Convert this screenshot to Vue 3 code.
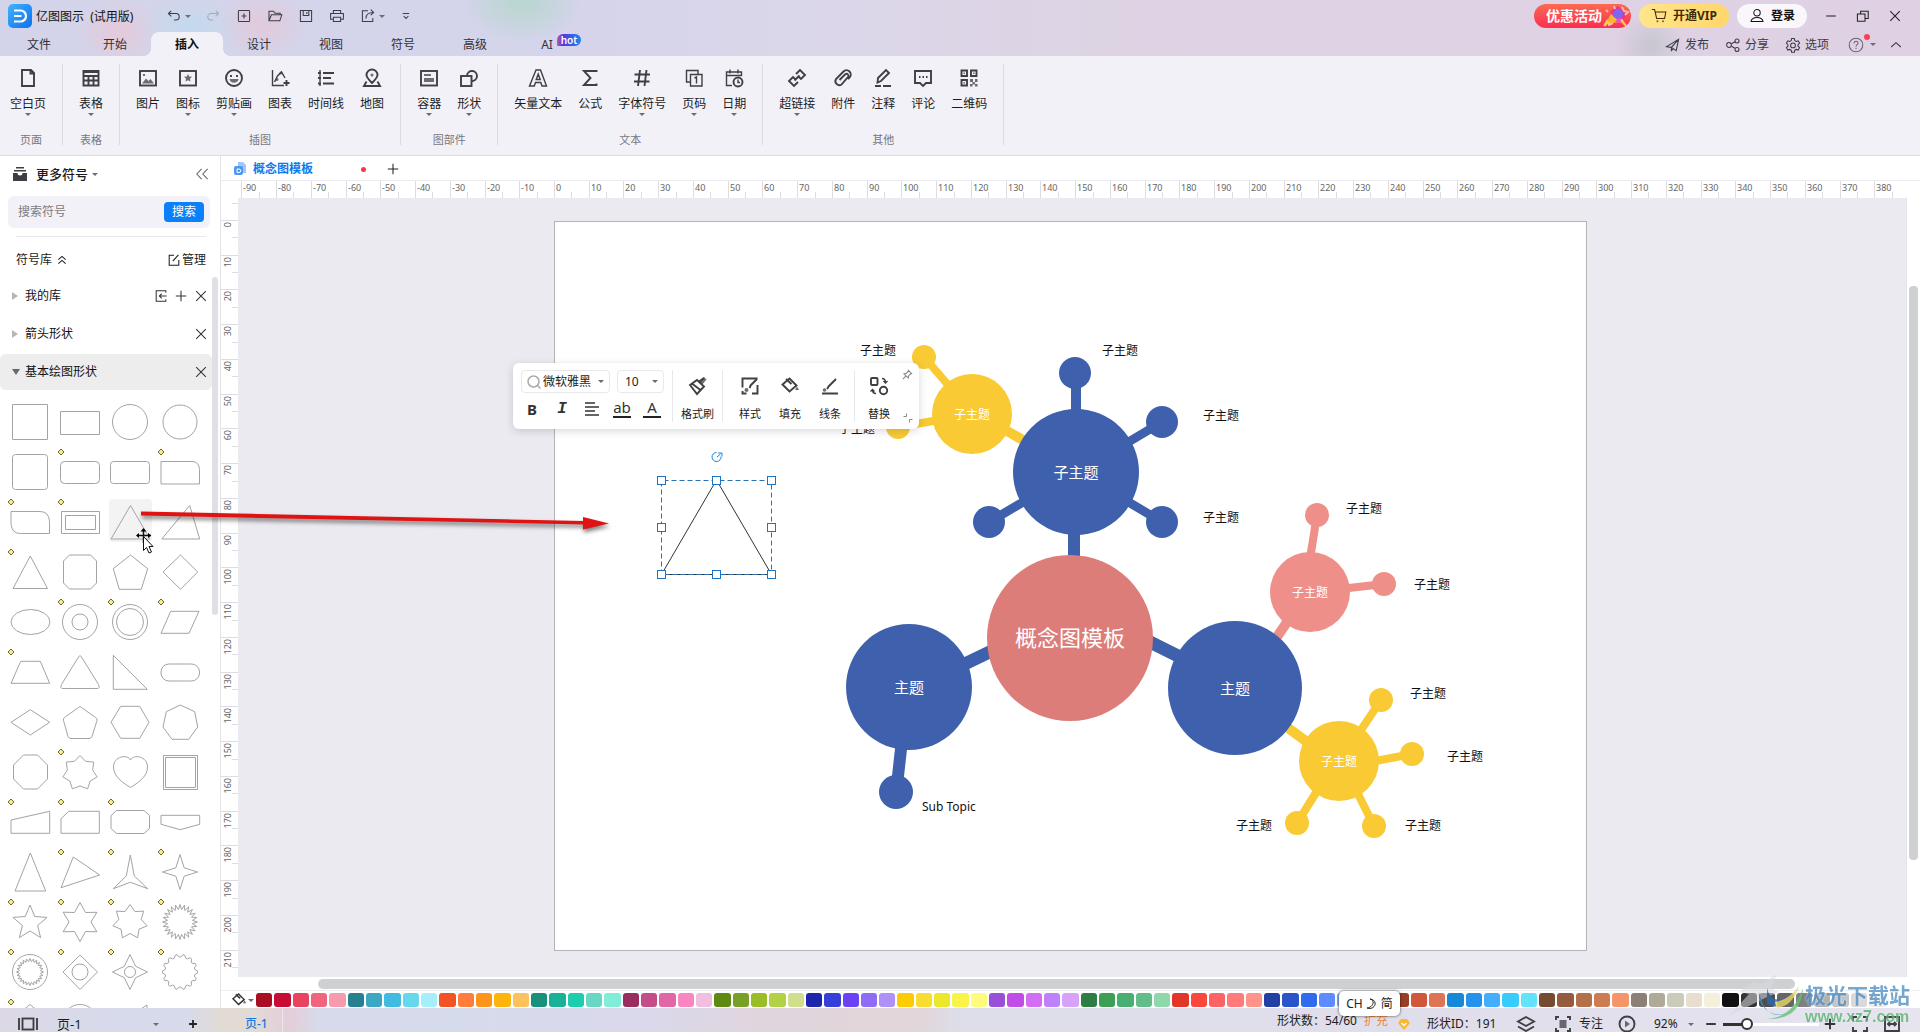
<script setup>
const icons = {
  undo: '<path d="M3 7h9.500a4 4 0 0 1 0 8H10M6.500 3.500 3 7l3.500 3.500"/>',
  redo: '<path d="M17 7H7.500a4 4 0 0 0 0 8H10M13.500 3.500 17 7l-3.500 3.500"/>',
  add: '<rect x="3" y="3" width="14" height="14" rx="1"/><path d="M10 7v6M7 10h6"/>',
  folder: '<path d="M2.500 16V4h5.500l2 2.500h6.500v2M2.500 16l3-7.500H18.500L16 16z"/>',
  save: '<path d="M3 3h14v14H3zM6.500 3v6.500h7V3M11 5v2.500"/>',
  print: '<path d="M5.500 7V3h9v4M5.500 14H2V7h16v7h-3.500M5.500 11.500h9V17h-9z"/>',
  share: '<path d="M10 3.500H3v13.500h13V12.500M7.500 13c0-5 3-7.500 9-7.500M13.500 2l3.500 3.500L13.500 9"/>',
  more: '<path d="M6 7h8M7 10l3 3 3-3"/>',
  page: '<path d="M4 2h9l3 3v13H4zM12.500 2v3.500H16"/>',
  table: '<path d="M2.500 3h15v14.500h-15zM2.500 4h15M2.500 8h15M2.500 12.500h15M7.500 8v9.500M12.500 8v9.500"/>',
  picture: '<rect x="2" y="3" width="16" height="14.500"/><path class="fill" d="m4 15.500 4-5 2.500 2.500 2-2 3.500 4.500zM5 6h2v2H5z"/>',
  badge: '<rect x="2" y="3" width="16" height="14.500"/><path class="fill" d="m10 6 1.200 2.500 2.800.3-2 2 .5 2.800-2.500-1.300-2.500 1.300.5-2.800-2-2 2.800-.3z"/>',
  smile: '<circle cx="10" cy="10" r="8"/><path d="M7 7v2M13 7v2"/><path class="fill" d="M5.500 11h9c-.5 5-8.500 5-9 0z"/>',
  chart: '<path class="thin" d="M2.500 2v15.500H14M4.500 14l3-6 4-4 3.500 6"/><circle class="fill" cx="7" cy="11.500" r="1.500"/><circle class="fill" cx="11" cy="5" r="1.500"/><path d="M16.500 12v6M13.500 15h6"/>',
  timeline: '<path class="thin" d="M4 2v16"/><path d="M7 5h11M7 10h8M7 15.500h11M2 5h3M2 10h3M2 15.500h3"/>',
  map: '<path d="M10 15c-4-4-5.500-6-5.500-8a5.500 5.500 0 0 1 11 0c0 2-1.500 4-5.500 8zM4.500 13.500 2 18h16l-2.500-4.500"/><circle class="fill" cx="10" cy="7" r="1.500"/>',
  container: '<rect x="2" y="3" width="16" height="14.500"/><path class="fill" d="M5 6h7v2H5zM5 10h10v4H5z"/>',
  shapes: '<path d="M8 7.500a5 5 0 1 1 5 5.500"/><rect x="2" y="8" width="10.500" height="10"/>',
  vectorText: '<path class="thin" d="M8 2h4.500l6 16h-4.500l-1.200-3.500H7.500L6.300 18H1.500zM10.200 6l-2 5.500h4z"/>',
  sigma: '<path d="M16.500 4V3H4l6.500 7L4 17h12.500v-1.500"/>',
  hash: '<path d="M8 2 6 18M14.500 2l-2 16M2.500 6.500h15.500M2 13.500h15.500"/>',
  pageNo: '<path class="thin" d="M7 14H2.500V2.500H14V6"/><path class="thin" d="M6.500 6.500h11.500v11.500H6.500zM10.500 10l2-1v6.500"/>',
  date: '<path class="thin" d="M8 17.500H2.500V4h15v4M2.500 7.500h15M6 1.500v4M14 1.500v4"/><circle cx="14" cy="14" r="4.500"/><path class="thin" d="M14 11.500V14.500h2"/>',
  link: '<path d="m9 6 4-4 5 5-4 4-2-2M11 14l-4 4-5-5 4-4 2 2M7.500 12.500l5-5"/>',
  clip: '<path d="m6.500 12 6-6a2 2 0 0 1 2.500 3l-6.500 7.500a4 4 0 0 1-5.500-5.500l7.500-7.500a4 4 0 0 1 6 6l-1.500 1.500"/>',
  note: '<path d="M4.500 14.500 5 10l8-8 3 3-8 8zM2 18h6M10 18h8"/>',
  comment: '<path d="M2 3h16v12h-5l-3 3-3-3H2z"/><path d="M6 9h1.500M9.500 9H11M13 9h1.500"/>',
  qr: '<path d="M2.500 2.500H8V8H2.500zM12 2.500h5.500V8H12zM2.500 12H8v5.500H2.500z"/><path class="fill" d="M4.500 4.500h1.500V6H4.500zM14 4.500h1.500V6H14zM4.500 14h1.500v1.500H4.500zM11 11h3v3h-3zM16 11h2.500v3H16zM13.500 14H16v2.500h-2.500zM11 16h2.500v2.500H11zM16 16h2.500v2.500H16z"/>',
  plane: '<path d="M2 12 17 3l-3 14-6-4zM8 13l8-9M8 13v4l2.500-2.500"/>',
  nodes: '<circle cx="5" cy="10" r="3"/><circle cx="15" cy="5" r="2.500"/><circle cx="15" cy="15.500" r="2.500"/><path d="m8 8.500 4.500-2.500M8 11.500l4.500 2.500"/>',
  gear: '<path d="M8.300 2h3.400l.6 2.500 1.700 1 2.500-.8 1.700 3-1.900 1.800v2l1.900 1.800-1.700 3-2.500-.8-1.700 1-.6 2.500H8.300l-.6-2.500-1.700-1-2.500.8-1.700-3 1.900-1.800v-2L1.800 7.700l1.700-3 2.500.8 1.700-1z"/><circle cx="10" cy="10.500" r="3"/>',
  help: '<circle cx="10" cy="10" r="8.500"/><path d="M7.500 8c0-3.500 5-3.500 5-.5 0 2-2.500 2-2.500 4.500M10 13.500v1.500"/>',
  up: '<path d="m4 12.500 6-5.500 6 5.500"/>',
  cart: '<path d="M1 2h3.500l2.500 11h10L18.500 5H5.500"/><circle class="fill" cx="8" cy="16.500" r="1.200"/><circle class="fill" cx="15" cy="16.500" r="1.200"/>',
  user: '<circle cx="10" cy="6" r="4"/><path d="M2.500 17c1-7 14-7 15 0z"/>',
  min: '<path d="M4 10h12"/>',
  restore: '<path d="M3 7.500h9.500V16.500H3zM7 7V4h9.500v9h-4"/>',
  close: '<path d="m4 4 12 12M16 4 4 16"/>',
  collapse: '<path d="m9.500 3.500-6 6.500 6 6.500M17 3.500 11 10l6 6.500"/>',
  upup: '<path d="m5.500 9.500 4.500-4 4.500 4M5.500 14.500l4.500-4 4.500 4"/>',
  edit: '<path d="M10 4H4v12.500h12V10M8.500 11.500l7-8"/>',
  importIn: '<path d="M16 6V3.500H4v13h12V14M8 10h9M11 7l-3 3 3 3"/>',
  plus: '<path d="M10 3.500v13M3.500 10h13"/>',
  brush: '<path d="m2 9 7-5 7 6.500-7 7.500zM11 6l5-4M4.500 8l8 6"/><path class="fill" d="m10 5 6-4 2.500 2.500-4.500 5.500z"/>',
  styleIcon: '<path d="M17.500 2.500H2.500v9M2.500 15v2.500h4M12 17.500h5.500V9"/><path d="m10 10 7-7M9.500 12l1-2"/><circle class="fill" cx="6.500" cy="14" r="2"/>',
  bucket: '<path d="m2.500 8.500 7-6 7 7-7 6zM6 3l5.500 5"/><path class="fill" d="m17 10.500 2 3.500h-4z"/>',
  lineIcon: '<path d="M2 17.500h16M8 11l8-8M7 13l2-3"/><circle class="fill" cx="4.500" cy="14" r="1.800"/>',
  replace: '<rect x="2" y="2" width="6.500" height="7" rx="1"/><circle cx="14.500" cy="14.500" r="3.700"/><path class="thin" d="M13 2.500c2.500 0 3.500 1.500 3.500 4M14.500 5l2 2 2-2M7 17.500c-2.500 0-3.500-1-3.500-3.500M1.500 15.500l2-2 2 2"/>',
  pin: '<path d="m3 17 5-5M5 8l7 7 1-4 4-4-4-4-4 4zM11.500 1.500l7 7"/>',
  inward: '<path d="M7 1v6H1M19 13h-6v6"/>',
  layers: '<path d="m10 3 8 4.500-8 4.500-8-4.500zM2 12.500l8 4.500 8-4.500"/>',
  focus: '<path d="M6 3H3v3M14 3h3v3M6 17H3v-3M14 17h3v-3"/><rect class="fill" x="6.500" y="6" width="7" height="8"/>',
  play: '<circle cx="10" cy="10" r="7.500"/><path class="fill" d="m8 6.500 5 3.500-5 3.500z"/>',
  full: '<path d="M7 3H3v4M13 3h4v4M7 17H3v-4M13 17h4v-4"/>',
  fit: '<path d="M3 3h14v14H3zM6 10h8M8 8l-2 2 2 2M12 8l2 2-2 2"/>',
  frame: '<rect x="4.500" y="4.500" width="11" height="11"/><path d="M1 4v12M19 4v12"/>',
}

const quick = [
  ['undo', '撤销'], ['redo', '重做'], ['add', '新建'], ['folder', '打开'],
  ['save', '保存'], ['print', '打印'], ['share', '导出'], ['more', '更多'],
]
const tabs = ['文件', '开始', '插入', '设计', '视图', '符号', '高级', 'AI']
const groups = [
  { name: '页面', items: [['page', '空白页', 1]] },
  { name: '表格', items: [['table', '表格', 1]] },
  { name: '插图', items: [['picture', '图片'], ['badge', '图标', 1], ['smile', '剪贴画', 1], ['chart', '图表'], ['timeline', '时间线'], ['map', '地图']] },
  { name: '图部件', items: [['container', '容器', 1], ['shapes', '形状', 1]] },
  { name: '文本', items: [['vectorText', '矢量文本'], ['sigma', '公式'], ['hash', '字体符号', 1], ['pageNo', '页码', 1], ['date', '日期', 1]] },
  { name: '其他', items: [['link', '超链接', 1], ['clip', '附件'], ['note', '注释'], ['comment', '评论'], ['qr', '二维码']] },
]

const poly = (s) => 'M' + s.trim().split(/\s+/).join('L') + 'z'
const star = (n, R, r, cy = 25) => {
  const pts = []
  for (let i = 0; i < n * 2; i++) {
    const a = (Math.PI * i) / n - Math.PI / 2
    const d = i % 2 ? r : R
    pts.push(`${(25 + d * Math.cos(a)).toFixed(1)},${(cy + d * Math.sin(a)).toFixed(1)}`)
  }
  return poly(pts.join(' '))
}
const circle = (r, cy = 25) => `M${25 - r},${cy}a${r},${r} 0 1 0 ${2 * r},0a${r},${r} 0 1 0 ${-2 * r},0z`
const rect = (x, y, w, h) => `M${x},${y}h${w}v${h}h${-w}z`
const round = (x, y, w, h, r) =>
  `M${x + r},${y}h${w - 2 * r}a${r},${r} 0 0 1 ${r},${r}v${h - 2 * r}a${r},${r} 0 0 1 ${-r},${r}h${2 * r - w}a${r},${r} 0 0 1 ${-r},${-r}v${2 * r - h}a${r},${r} 0 0 1 ${r},${-r}z`
const gearPath = () => {
  let d = ''
  for (let i = 0; i < 56; i++) {
    const a = (Math.PI * (i - 0.5)) / 28
    const R = i % 4 < 2 ? 17.5 : 15
    d += `${(25 + R * Math.cos(a)).toFixed(1)},${(25 + R * Math.sin(a)).toFixed(1)} `
  }
  return poly(d)
}
// each entry: outline path, has an adjustable-shape marker
const shapes = [
  [rect(7.5, 7.5, 35, 35)], [rect(5.5, 14.5, 39, 23)], [circle(17.5)], [circle(17)],
  [round(7.5, 7.5, 35, 35, 3)], [round(5.5, 14.5, 39, 22, 4), 1], [round(5.5, 14.5, 39, 22, 3)], ['M6,14.5h31q7,0 7.500,8v14.500h-38.500z', 1],
  ['M6,14.5h29q9,0 9.500,10v12h-29q-9,0-9.500-10z', 1], [rect(6.5, 14.5, 38, 22) + rect(10.5, 18.5, 30, 14), 1], [poly('25.5,8.5 6,42 45,42')], [poly('34.7,8.5 6.7,42 44.7,42')],
  [poly('25.3,9 8,41.5 42.5,41.5'), 1], [poly('14.5,8 35.5,8 41.5,14 41.5,36 35.5,42 14.5,42 8.5,36 8.5,14')], [poly('25.5,8 42.7,21.7 36.3,42.3 14.3,42.3 8.3,21.7')], [poly('25.5,8 42.7,25 25.5,42.3 8,25')],
  ['M6,25a19.500,12.500 0 1 0 39,0a19.500,12.500 0 1 0-39,0z'], [circle(17.5) + circle(8), 1], [circle(17.5) + circle(13.5), 1], [poly('15.7,14.3 44,14.3 34,36.3 6,36.3'), 1],
  [poly('15.7,14.3 35.3,14.3 44.7,36.3 6,36.3'), 1], ['M23.500,10q1.500-3 3,0l17,27.500q2,4-1.500,4h-34q-3.500,0-1.500-4z'], [poly('8.3,8.3 42.3,42.3 8.3,42.3')], [round(6, 17, 38.5, 17, 8)],
  [poly('6,25.3 25.3,12.7 44.7,25.3 25.3,38')], ['M23.500,10.500q1.500-2 3,0l14,10q2,1 1.500,3l-5,16q-1,2-3,2h-18q-2,0-3-2l-4.500-16q-.5-2 1-3z'], [poly('6,25.3 15.7,9.3 34.7,9.3 44,25.3 34.7,41.3 15.7,41.3')], [poly('25.3,8 39.7,14.7 42.7,30 33.7,42.3 17,42.3 8,30 11.3,14.7')],
  [poly('18.5,8 32.5,8 42.5,18 42.5,32 32.5,42 18.5,42 8.5,32 8.5,18')], [star(7, 17.5, 13, 26), 1], ['M25.500,13c3-6 17-4 17,7c0,9-8,15-17,20.500c-9-5.500-17-11.500-17-20.500c0-11 14-13 17-7z'], [rect(8.5, 8.5, 34, 34) + rect(10.5, 10.5, 30, 30)],
  [poly('6,23 44.7,14.3 44.7,36.3 6,36.3'), 1], [poly('13.7,14.3 44.3,14.3 44.3,36.3 6,36.3 6,21.7'), 1], [poly('11.5,13.5 39,13.5 44.5,18.5 44.5,31.5 39,36.5 11.5,36.5 6,31.5 6,18.5'), 1], [poly('6,18.3 44.7,18.3 44.7,27.3 25.3,32.7 6,27.3')],
  [poly('25.3,6 10,44 40.7,44')], [poly('18.3,10 44.7,28 6,40.7'), 1], [poly('25.3,8 29.3,29 42.7,41.7 25.3,35.3 8.3,41.7 21.3,29'), 1], [star(4, 17.5, 6), 1],
  [star(5, 18, 8, 26), 1], [star(6, 19.5, 11), 1], [star(7, 17.5, 11.5), 1], [star(24, 17.5, 12.5), 1],
  [circle(17.5) + star(24, 13.5, 10.5), 1], [poly('25,8 42.5,25 25,42.5 8,25') + circle(8), 1], [star(4, 17.5, 8) + circle(5.5), 1], [gearPath(), 1],
  [star(8, 17.5, 14), 1], [circle(17.5)], [poly('42,8 42,40 8,30')], [],
]

const hTicks = Array.from({ length: 96 }, (_, i) => ({ v: -90 + i * 5, x: Math.round(333 + (i - 18) * 17.372) })).filter((t) => t.v < 390)
const vTicks = Array.from({ length: 46 }, (_, i) => ({ v: -10 + i * 5, y: Math.round(22 + (i - 2) * 17.372) }))

const blue = '#3f61ad', gold = '#f9ca33', pink = '#ee8f89'
const links = [
  [1076, 380, 1076, 420, 10, blue], [1162, 422, 1110, 453, 9, blue], [1162, 522, 1110, 491, 9, blue], [989, 522, 1042, 491, 9, blue],
  [1074, 525, 1074, 560, 12, blue], [1140, 637, 1200, 667, 13, blue], [1000, 647, 950, 671, 13, blue], [902, 740, 897, 785, 12, blue],
  [1296, 609, 1268, 650, 10, pink], [1317, 515, 1309, 565, 8, pink], [1384, 584, 1340, 589, 8, pink],
  [1280, 722, 1322, 753, 10, gold], [1000, 427, 1030, 444, 10, gold], [924, 357, 956, 394, 8, gold], [898, 427, 945, 419, 8, gold],
  [1381, 700, 1355, 739, 8, gold], [1412, 754, 1365, 763, 8, gold], [1374, 826, 1352, 782, 8, gold], [1297, 823, 1324, 780, 8, gold],
]
const bubbles = [
  [1076, 472, 63, blue, '子主题', 15], [1075, 373, 16, blue], [1162, 422, 16, blue], [1162, 522, 16, blue], [989, 522, 16, blue],
  [1235, 688, 67, blue, '主题', 15], [909, 687, 63, blue, '主题', 15], [896, 792, 17, blue],
  [972, 414, 40, gold, '子主题', 12], [924, 357, 12, gold], [898, 427, 12, gold],
  [1310, 592, 40, pink, '子主题', 12], [1317, 515, 12, pink], [1384, 584, 12, pink],
  [1339, 761, 40, gold, '子主题', 12], [1381, 700, 12, gold], [1412, 754, 12, gold], [1374, 826, 12, gold], [1297, 823, 12, gold],
  [1070, 638, 83, '#dc7d79', '概念图模板', 22],
]
const captions = [
  [878, 351], [857, 429], [1120, 351], [1221, 416], [1221, 518], [1364, 509], [1432, 585], [1428, 694], [1465, 757], [1423, 826], [1254, 826],
]
const handles = [[661, 480], [716, 480], [771, 480], [661, 527], [771, 527], [661, 574], [716, 574], [771, 574]]

const palette = (
  'a90e22 c80d34 e8435f f0647e f69bab 26808f 3aa7c3 3fbcdf 67d7ee a5effb f25324 fe7d3c fe9419 fdb50e fcc35d ' +
  '17917b 19b296 1cceb0 68d7c4 80edd8 9b2c5e c44d89 e265a6 f985c1 f0bfe0 5d8b12 76a026 9abd28 b3d145 d0df8c ' +
  '1d25ac 373fd9 6d42f5 8e6cf5 ae91f8 fccb00 f9dc30 ece72b f8f448 fdfc7c 9a4fd9 c24ce6 d26df4 be81fa d8a2fa ' +
  '2e7d43 3c9f54 48ae72 62bd88 8fd8aa e23628 fb483e fe6363 ff7b7b ff9289 223fa6 2b54cc 306aee 5e8bff 86a9ff ' +
  '7c2b1a 8a3320 9c3e27 d0573b de7355 1788d8 2591ef 43aefb 38ccfc 62e3fc 774b32 945b3f b3704a cd7b52 f7956a ' +
  '8b8075 b0ab99 cccab8 e8decf f5f0dc 111111 333333 4d4d4d 666666 808080 b0b0b0 c4c4c4 d9d9d9 ececec ffffff'
).split(' ')
</script>

<template>
  <div class="app">
    <header class="chrome">
      <div class="titlebar">
        <svg class="logo" viewBox="0 0 24 24"><defs><linearGradient id="lg" x1="0" y1="0" x2="1" y2="1"><stop offset="0" stop-color="#3fb4fb" /><stop offset="1" stop-color="#0f6ff0" /></linearGradient></defs><rect width="24" height="24" rx="5" fill="url(#lg)" /><path d="M6 6.500h6.500a5.500 5.500 0 0 1 0 11H6M6 12h7.500" fill="none" stroke="#fff" stroke-width="2.200" /></svg>
        <span class="appname">亿图图示 &nbsp;(试用版)</span>
        <nav class="quick">
          <button v-for="q in quick" :key="q[0]" :aria-label="q[1]" :class="q[0]">
            <svg class="ico s16" viewBox="0 0 20 20" v-html="icons[q[0]]"></svg><i v-if="q[0] === 'undo' || q[0] === 'share'" class="caret"></i>
          </button>
        </nav>
        <div class="account">
          <button class="promo">优惠活动
            <svg viewBox="0 0 28 24"><path d="M3 20 9 10l9 8z" fill="#ffb432" /><path d="m8 8 8-6 9 9-7 7z" fill="#e93390" /><circle cx="16" cy="10" r="5" fill="#7a67f4" /><path d="m20 3 2 4 4 1-3 3M2 22l3-5 2 4 4-2M19 15l5 7M4 6l2 2M12 2l1 3" fill="none" stroke="#ffb9a0" stroke-width="2" /><path d="m13 18 4-5 5 7z" fill="#e84ed0" /><path d="m3 22 2-4 3 2M19 16l4 5" fill="none" stroke="#ffcf3e" stroke-width="2" /></svg>
          </button>
          <button class="vip"><svg class="ico s16" viewBox="0 0 20 20" v-html="icons.cart"></svg>开通VIP</button>
          <button class="login"><svg class="ico s16" viewBox="0 0 20 20" v-html="icons.user"></svg>登录</button>
        </div>
        <div class="winbtns">
          <button v-for="w in ['min', 'restore', 'close']" :key="w" :aria-label="w"><svg class="ico s16" viewBox="0 0 20 20" v-html="icons[w]"></svg></button>
        </div>
      </div>
      <div class="tabbar">
        <nav class="tabs">
          <button v-for="t in tabs" :key="t" :class="{ on: t === '插入' }">{{ t }}<span v-if="t === 'AI'" class="hot">hot</span></button>
        </nav>
        <div class="tools">
          <button><svg class="ico s16" viewBox="0 0 20 20" v-html="icons.plane"></svg>发布</button>
          <button><svg class="ico s16" viewBox="0 0 20 20" v-html="icons.nodes"></svg>分享</button>
          <button><svg class="ico s16" viewBox="0 0 20 20" v-html="icons.gear"></svg>选项</button>
          <button class="help" aria-label="帮助"><svg class="ico s16" viewBox="0 0 20 20" v-html="icons.help"></svg><i class="reddot"></i><i class="caret"></i></button>
          <button aria-label="收起"><svg class="ico s16" viewBox="0 0 20 20" v-html="icons.up"></svg></button>
        </div>
      </div>
    </header>

    <section class="ribbon">
      <div v-for="g in groups" :key="g.name" class="group">
        <div class="row">
          <button v-for="it in g.items" :key="it[1]">
            <svg class="ico big" viewBox="0 0 20 20" v-html="icons[it[0]]"></svg>
            <span>{{ it[1] }}</span><i v-if="it[2]" class="caret"></i>
          </button>
        </div>
        <div class="gname">{{ g.name }}</div>
      </div>
    </section>

    <main class="body">
      <aside class="side">
        <div class="sidehead">
          <svg class="tray" viewBox="0 0 14 14"><path d="M3 0h8v1.500H3zM1 3h12v1.500H1zM0 6h4.500q0 2.500 2.500 2.500T9.500 6H14v8H0z" fill="#3d3d42" /></svg>
          <strong>更多符号</strong><i class="caret"></i>
          <button aria-label="折叠"><svg class="ico s16" viewBox="0 0 20 20" v-html="icons.collapse"></svg></button>
        </div>
        <form class="search" @submit.prevent>
          <input type="text" placeholder="搜索符号" aria-label="搜索符号" /><button>搜索</button>
        </form>
        <div class="libhead"><span>符号库</span><svg class="ico s16" viewBox="0 0 20 20" v-html="icons.upup"></svg>
          <button><svg class="ico s16" viewBox="0 0 20 20" v-html="icons.edit"></svg>管理</button>
        </div>
        <div class="libs">
          <div class="lib"><i class="tri"></i><span>我的库</span>
            <button aria-label="导入"><svg class="ico s16" viewBox="0 0 20 20" v-html="icons.importIn"></svg></button>
            <button aria-label="新建"><svg class="ico s16" viewBox="0 0 20 20" v-html="icons.plus"></svg></button>
            <button aria-label="关闭"><svg class="ico s16" viewBox="0 0 20 20" v-html="icons.close"></svg></button>
          </div>
          <div class="lib"><i class="tri"></i><span>箭头形状</span>
            <button aria-label="关闭"><svg class="ico s16" viewBox="0 0 20 20" v-html="icons.close"></svg></button>
          </div>
          <div class="lib open"><i class="tri"></i><span>基本绘图形状</span>
            <button aria-label="关闭"><svg class="ico s16" viewBox="0 0 20 20" v-html="icons.close"></svg></button>
          </div>
          <div class="shapes">
            <svg v-for="(s, i) in shapes" :key="i" viewBox="0 0 50 50">
              <rect v-if="i === 10" x="4" y="2" width="43" height="43" rx="4" fill="#f3f3f4" stroke="none" />
              <path :d="s[0]" />
              <path v-if="s[1]" class="mark" d="m6 2 3 3-3 3-3-3z" />
            </svg>
          </div>
          <div class="sidescroll"></div>
        </div>
      </aside>

      <section class="work">
        <div class="doctabs">
          <svg class="docico" viewBox="0 0 12 14"><path d="M4 0h5l3 3v8H4z" fill="#9fc7fb" /><rect y="4" width="9" height="9" rx="2" fill="#4b96f7" /><path d="M3 7h2a1.500 1.500 0 0 1 0 3.500H3z" fill="none" stroke="#fff" /></svg>
          <a href="#">概念图模板</a><i class="dot"></i>
          <button aria-label="新建文档"><svg class="ico s16" viewBox="0 0 20 20" v-html="icons.plus"></svg></button>
        </div>
        <div class="hruler">
          <svg width="1700" height="18">
            <template v-for="t in hTicks" :key="t.v">
              <path :d="`M${t.x}.5 ${t.v % 10 ? 11 : 0}V18`" />
              <text v-if="t.v % 10 === 0" :x="t.x + 2" y="10">{{ t.v }}</text>
            </template>
          </svg>
        </div>
        <div class="mid">
          <div class="vruler">
            <svg width="18" height="780">
              <template v-for="t in vTicks" :key="t.v">
                <path v-if="t.y > 0" :d="`M${t.v % 10 ? 11 : 0} ${t.y}.5H18`" />
                <text v-if="t.v % 10 === 0 && t.v >= 0" :transform="`translate(10 ${t.y + 2}) rotate(-90)`" text-anchor="end">{{ t.v }}</text>
              </template>
            </svg>
          </div>
          <div class="canvas">
            <svg class="drawing" width="1619" height="779" viewBox="238 198 1619 779">
              <rect x="554.5" y="221.500" width="1032" height="729" fill="#fff" stroke="#b4b4b8" />
              <line v-for="(l, i) in links" :key="'l' + i" :x1="l[0]" :y1="l[1]" :x2="l[2]" :y2="l[3]" :stroke="l[5]" :stroke-width="l[4]" />
              <g v-for="(b, i) in bubbles" :key="'b' + i">
                <circle :cx="b[0]" :cy="b[1]" :r="b[2]" :fill="b[3]" />
                <text v-if="b[4]" :x="b[0]" :y="b[1] + Math.round(b[5] * 0.38)" :font-size="b[5]" fill="#fff" text-anchor="middle">{{ b[4] }}</text>
              </g>
              <text v-for="(c, i) in captions" :key="'c' + i" :x="c[0]" :y="c[1] + 4" font-size="12" fill="#111" text-anchor="middle">子主题</text>
              <text x="922" y="811" font-size="12" fill="#111">Sub Topic</text>
              <path d="M716.500 480 661.500 574.500h110z" fill="none" stroke="#333" />
              <path d="M661.500 574.500v-94h110v94z" fill="none" stroke="#2a6fb8" stroke-dasharray="5 3" />
              <rect v-for="(h, i) in handles" :key="'h' + i" :x="h[0] - 3.5" :y="h[1] - 3.5" width="8" height="8" fill="#fff" stroke="#1d74c4" />
              <path d="M716.500 452.500a4.500 4.500 0 1 0 4.500 4M717 457l3.500-3M718 453h4v3.500" fill="none" stroke="#1d82d8" />
            </svg>

            <div class="float">
              <div class="fcol">
                <div class="frow">
                  <label class="sel font"><svg viewBox="0 0 14 14"><circle cx="6.500" cy="6.500" r="5.500" /><path d="m10.500 10.500 3 3" /></svg><select aria-label="字体"><option>微软雅黑</option></select><i class="caret"></i></label>
                  <label class="sel size"><select aria-label="字号"><option>10</option></select><i class="caret"></i></label>
                </div>
                <div class="frow fmt">
                  <button><b>B</b></button><button><em>I</em></button>
                  <button aria-label="对齐"><svg viewBox="0 0 16 16"><path d="M1 2h10M1 6h14M1 10h10M1 14h14" /></svg></button>
                  <button class="under">ab</button><button class="under">A</button>
                </div>
              </div>
              <div class="fgrp"><button><svg class="ico big" viewBox="0 0 20 20" v-html="icons.brush"></svg>格式刷</button></div>
              <div class="fgrp">
                <button><svg class="ico big" viewBox="0 0 20 20" v-html="icons.styleIcon"></svg>样式</button>
                <button><svg class="ico big" viewBox="0 0 20 20" v-html="icons.bucket"></svg>填充</button>
                <button><svg class="ico big" viewBox="0 0 20 20" v-html="icons.lineIcon"></svg>线条</button>
              </div>
              <div class="fgrp"><button><svg class="ico big" viewBox="0 0 20 20" v-html="icons.replace"></svg>替换</button></div>
              <div class="fpin"><svg class="ico s12" viewBox="0 0 20 20" v-html="icons.pin"></svg><svg class="ico s10" viewBox="0 0 20 20" v-html="icons.inward"></svg></div>
            </div>
          </div>
          <div class="vscroll"><div></div></div>
        </div>
        <div class="hscroll"><div></div></div>
        <div class="palette">
          <button class="pour" aria-label="填充颜色"><svg class="ico s16" viewBox="0 0 20 20" v-html="icons.bucket"></svg><i class="caret"></i></button>
          <i v-for="(c, i) in palette" :key="i" class="sw" :style="{ background: '#' + c }"></i>
        </div>
      </section>
    </main>

    <footer class="status">
      <div class="sleft">
        <button class="view" aria-label="视图"><svg class="ico big" viewBox="0 0 20 20" v-html="icons.frame"></svg></button>
        <button class="pagesel">页-1<i class="caret"></i></button>
        <button class="newpage" aria-label="新建页"><svg class="ico s12" viewBox="0 0 20 20" v-html="icons.plus"></svg></button>
      </div>
      <button class="pagetab">页-1</button>
      <div class="sright">
        <span class="count">形状数：54/60 <a href="#">扩充</a></span>
        <svg class="gem" viewBox="0 0 12 12"><path d="M3 1h6l3 4-6 7-6-7z" fill="#fcb72b" /><path d="m3.500 5 2.500 2.500L8.500 5" fill="none" stroke="#fff" stroke-width="1.500" /></svg>
        <span class="sid">形状ID：191</span>
        <button aria-label="图层"><svg class="ico big" viewBox="0 0 20 20" v-html="icons.layers"></svg></button>
        <button class="foc"><svg class="ico big" viewBox="0 0 20 20" v-html="icons.focus"></svg>专注</button>
        <button class="play" aria-label="播放"><svg class="ico big" viewBox="0 0 20 20" v-html="icons.play"></svg></button>
        <button class="zoomv">92%<i class="caret"></i></button>
        <button class="step" aria-label="缩小"><svg class="ico s16" viewBox="0 0 20 20" v-html="icons.min"></svg></button>
        <input type="range" min="0" max="100" value="22" aria-label="缩放" />
        <button class="step" aria-label="放大"><svg class="ico s16" viewBox="0 0 20 20" v-html="icons.plus"></svg></button>
        <button class="full" aria-label="全屏"><svg class="ico big" viewBox="0 0 20 20" v-html="icons.full"></svg></button>
        <button aria-label="适应"><svg class="ico big" viewBox="0 0 20 20" v-html="icons.fit"></svg></button>
      </div>
    </footer>

    <svg class="pointer" width="500" height="60" viewBox="130 500 500 60">
      <g class="arrow"><path d="M141 511.500 583 521l1 3.500L141 515.500z" /><path d="m583 517 26 6.500-26 6z" /></g>
      <path d="M143.500 529v14M137 535.500h14" stroke="#111" stroke-width="1.500" /><path d="m143.500 528-3 3.500h6zM136 535.500l3-2.500v5zM151 535.500l-3-2.500v5z" />
      <path d="M143.500 536.500v14l3-3 2.500 5.500 2.500-1-2.500-5.500h4z" fill="#fff" stroke="#111" />
    </svg>
    <div class="ime">CH <svg viewBox="0 0 12 12"><path d="M4 1c5 1 4 8-3 9 8 3 12-8 3-9z" /></svg> 简</div>
    <div class="mark-site">
      <svg viewBox="0 0 74 50"><path d="M0 42 20 20l-10-2 14-10 8 2 16-10-6 14 8 4-14 6z" fill="#d7d9de" opacity=".7" /><path d="M30 18a20 20 0 1 0 38-6q8 22-12 28T30 18z" fill="#3d8fd0" /><path d="M38 14q4 18 22 8-8 16-22 8z" fill="#2f68ae" /><path d="M38 45q26-2 36-31-2 32-36 31z" fill="#62c171" /><path d="M46 28q14-2 24-16-6 20-22 22z" fill="#ecd768" /></svg>
      <div><b>极光下载站</b><span>www.xz7.com</span></div>
    </div>
  </div>
</template>

<style>
body { margin: 0; overflow: hidden; }
</style>

<style scoped>
.app { position: relative; display: flex; flex-direction: column; height: 100vh; min-height: 600px; overflow: hidden; font: 12px/16px "Noto Sans", "Noto Sans CJK SC", sans-serif; color: #1c1c20; background: #fff; }
.app * { box-sizing: border-box; }
button { display: flex; align-items: center; padding: 0; border: 0; background: none; font: inherit; color: inherit; white-space: nowrap; }
a { color: inherit; text-decoration: none; }
.ico { display: block; flex: none; fill: none; stroke: currentColor; stroke-width: 1.3; }
.ico :deep(.fill) { fill: currentColor; stroke: none; opacity: .75; }
.ico :deep(.thin) { stroke-width: 1.4; }
.s16 { width: 16px; height: 16px; }
.s12 { width: 12px; height: 12px; stroke-width: 1.8; }
.s10 { width: 10px; height: 10px; stroke-width: 2; }
.big { width: 20px; height: 20px; stroke-width: 1.9; color: #3f3f44; }
.caret { flex: none; width: 0; height: 0; border: 3px solid transparent; border-top: 3px solid #6c6c74; border-bottom: 0; }

.chrome { flex: none; height: 56px; background:
  radial-gradient(ellipse 42px 34px at 118px 32px, #e2cbdc 20%, transparent),
  radial-gradient(ellipse 50px 30px at 190px 26px, #c4d9ee 10%, transparent),
  radial-gradient(ellipse 46px 34px at 262px 24px, #e0cbde 20%, transparent),
  radial-gradient(ellipse 60px 40px at 522px 2px, #bcd6d3 20%, transparent),
  radial-gradient(ellipse 34px 34px at 1650px 46px, #c9c7d1 10%, transparent),
  linear-gradient(90deg, #d3d4ea, #d5d4eb 30%, #dbd7ea 42%, #ddd3e3 58%, #dfd1e3); }
.titlebar { display: flex; align-items: center; height: 32px; padding-left: 8px; }
.logo { width: 24px; height: 24px; margin-right: 4px; }
.appname { width: 128px; padding-top: 1px; color: #111; }
.quick { display: flex; align-items: center; color: #3d3d45; }
.quick button { width: 31px; gap: 3px; }
.quick .undo { width: 39px; margin-left: 2px; }
.quick .redo { color: #a9a8bb; }
.quick .share { width: 38px; }
.account { display: flex; gap: 8px; margin-left: auto; font-weight: 700; }
.account button { height: 24px; border-radius: 12px; }
.promo { width: 97px; padding-left: 12px; font-size: 14px; color: #fff; background: linear-gradient(#fb6a52, #fb2f52); }
.promo svg { width: 28px; height: 24px; }
.vip { width: 90px; padding-left: 12px; gap: 6px; color: #43280a; background: linear-gradient(90deg, #ffe68a, #ffd66b); }
.login { width: 70px; padding-left: 12px; gap: 6px; background: #faf7fc; color: #111; }
.winbtns { display: flex; margin-left: 8px; padding-right: 9px; }
.winbtns button { width: 32px; justify-content: center; color: #222; }
.tabbar { display: flex; height: 24px; }
.tabs { display: flex; padding-left: 7px; }
.tabs button { position: relative; width: 72px; height: 24px; padding-top: 2px; justify-content: center; color: #303038; }
.tabs button:first-child { width: 64px; margin-right: 8px; }
.tabs .on { font-weight: 700; color: #111; background: #f2f1f8; border-radius: 8px 8px 0 0; }
.tabs .on::before, .tabs .on::after { content: ""; position: absolute; bottom: 0; left: -8px; width: 8px; height: 8px; background: radial-gradient(circle at 0 0, transparent 8px, #f2f1f8 8px); }
.tabs .on::after { left: auto; right: -8px; background: radial-gradient(circle at 100% 0, transparent 8px, #f2f1f8 8px); }
.hot { position: absolute; left: 46px; top: 2px; width: 24px; height: 12px; border-radius: 6px 6px 6px 1px; font-size: 10px; line-height: 12px; font-weight: 600; color: #fff; background: linear-gradient(90deg, #b25fa8, #5a35dd 25%, #1c88ee); }
.tools { display: flex; margin-left: auto; gap: 16px; padding: 1px 16px 0 0; color: #3b3a43; }
.tools button { gap: 4px; }
.tools .help { position: relative; width: 28px; gap: 6px; margin: 0 -4px 0 3px; color: #66636e; }
.reddot { position: absolute; left: 16px; top: 1px; width: 6px; height: 6px; border-radius: 50%; background: #fb4152; }

.ribbon { flex: none; display: flex; height: 100px; padding: 8px 0 10px; background: #f2f1f8; border-bottom: 1px solid #dddce2; }
.group { display: flex; flex-direction: column; padding: 4px 16px 0; border-right: 1px solid #dcdbe2; }
.group:first-child { padding-left: 10px; }
.row { display: flex; gap: 16px; }
.row button { flex-direction: column; justify-content: flex-start; }
.row button span { margin-top: 8px; }
.row .caret { margin-top: 1px; }
.gname { margin: auto -16px 0; line-height: 10px; font-size: 11px; text-align: center; color: #77777d; }
.group:first-child .gname { margin-left: -10px; }

.body { flex: 1; min-height: 0; display: flex; }
.side { flex: none; display: flex; flex-direction: column; width: 221px; border-right: 1px solid #e3e3ea; }
.sidehead { display: flex; align-items: center; height: 38px; padding: 0 10px 2px 13px; font-size: 13px; }
.sidehead strong { margin: 0 4px 0 9px; font-weight: 500; }
.tray { width: 14px; height: 14px; }
.sidehead button { margin-left: auto; color: #666; }
.search { display: flex; align-items: center; height: 32px; margin: 2px 10px 0 8px; padding: 0 6px 0 10px; border-radius: 6px; background: #f2f1f7; }
.search input { flex: 1; min-width: 0; padding: 0; border: 0; background: none; font: inherit; }
.search input::placeholder { color: #7b7b82; opacity: 1; }
.search button { justify-content: center; width: 40px; height: 20px; border-radius: 4px; background: #0a80fb; color: #fff; }
.libhead { display: flex; align-items: center; height: 33px; margin: 8px 14px 8px 16px; padding-top: 14px; border-top: 1px solid #e8e8ec; }
.libhead .s16 { margin-left: 2px; }
.libhead button { margin-left: auto; }
.libs { position: relative; flex: 1; min-height: 0; overflow: hidden; }
.lib { display: flex; align-items: center; gap: 4px; width: 212px; height: 38px; padding: 0 3px 0 12px; border-radius: 6px; color: #111; }
.lib.open { background: #ededee; height: 36px; margin: 1px 0; }
.lib span { flex: 1; }
.lib button { color: #333; }
.tri { margin-right: 3px; border: 4px solid transparent; border-left: 6px solid #b6b6ba; border-right: 0; }
.open .tri { border: 4px solid transparent; border-top: 6px solid #68686d; border-bottom: 0; margin-right: 1px; }
.shapes { display: grid; grid-template-columns: repeat(4, 50px); padding: 6px 0 0 5px; }
.shapes svg { width: 50px; height: 50px; fill: none; stroke: #a3a3a8; }
.shapes .mark { fill: #f7ee8b; stroke: #6f6730; }
.sidescroll { position: absolute; top: 0; right: 2px; width: 6px; height: 338px; border-radius: 3px; background: #e0dfe6; }

.work { flex: 1; min-width: 0; display: flex; flex-direction: column; }
.doctabs { flex: none; display: flex; align-items: center; height: 25px; padding: 2px 0 0 13px; border-bottom: 1px solid #ebebf1; }
.docico { width: 12px; height: 14px; margin-right: 7px; }
.doctabs a { color: #0a7bf0; font-weight: 700; }
.dot { width: 5px; height: 5px; margin: 0 19px 0 48px; border-radius: 50%; background: #f23a4a; }
.doctabs button { color: #222; }
.hruler { flex: none; height: 17px; overflow: hidden; border-right: 14px solid #fff; }
.hruler svg, .vruler svg { display: block; font-size: 9px; fill: #666; }
.hruler path, .vruler path { stroke: #dcdce4; }
.mid { flex: 1; min-height: 0; display: flex; }
.vruler { flex: none; width: 17px; overflow: hidden; }
.canvas { position: relative; flex: 1; min-width: 0; overflow: hidden; background: #eaeaf0; }
.drawing { position: absolute; left: 0; top: 0; }
.vscroll { flex: none; width: 14px; padding-top: 88px; border-left: 1px solid #e3e3ea; background: #fff; }
.vscroll div { width: 9px; height: 574px; margin-left: 2px; border-radius: 4px; background: #cfd0d2; }
.hscroll { flex: none; height: 14px; padding: 2px 125px 2px 97px; border-bottom: 1px solid #eee; }
.hscroll div { height: 10px; border-radius: 5px; background: #cfd0d2; }
.palette { flex: none; display: flex; gap: 2px; height: 17px; padding: 2px 17px 1px 10px; }
.pour { width: 23px; color: #333; gap: 1px; }
.pour .ico { stroke-width: 1.8; }
.sw { flex: 1; border-radius: 3px; }

.float { position: absolute; left: 275px; top: 165px; display: flex; width: 406px; height: 66px; padding: 7px 0; border-radius: 6px; background: #fff; box-shadow: 0 2px 8px rgba(40, 40, 60, .18); }
.fcol { width: 159px; padding-left: 8px; }
.frow { display: flex; gap: 7px; }
.sel { display: flex; align-items: center; height: 23px; padding: 0 5px; border: 1px solid #e9e9ed; border-radius: 4px; }
.sel.font { width: 89px; }
.sel.size { width: 47px; padding-left: 7px; }
.sel svg { flex: none; width: 14px; height: 14px; margin-right: 2px; fill: none; stroke: #aaa; stroke-width: 1.500; }
.sel select { flex: 1; min-width: 0; padding: 0; border: 0; background: none; font: inherit; color: #222; appearance: none; }
.fmt { justify-content: space-between; padding: 5px 11px 0 2px; color: #333; }
.fmt button { justify-content: center; width: 18px; height: 22px; font-size: 15px; line-height: 18px; }
.fmt em { font-family: "Liberation Mono", monospace; font-weight: 700; font-size: 16px; }
.fmt svg { width: 16px; height: 16px; stroke: #333; stroke-width: 1.600; }
.fmt .under { height: 20px; border-bottom: 2px solid #222; }
.fgrp { display: flex; gap: 16px; padding: 0 12px 0 15px; border-left: 1px solid #e8e8ec; }
.fgrp:nth-child(2) { padding: 0 8px; }
.fgrp:nth-child(4) { padding: 0 12px; }
.fgrp button { flex-direction: column; justify-content: flex-start; gap: 11px; padding-top: 6px; font-size: 11px; line-height: 14px; min-width: 24px; }
.fpin { position: absolute; right: 6px; top: 6px; display: flex; flex-direction: column; align-items: flex-end; gap: 32px; color: #888; }

.status { flex: none; display: flex; height: 24px; background:
  radial-gradient(ellipse 50px 60px at 236px 12px, #e2dbd4 30%, transparent),
  radial-gradient(ellipse 40px 60px at 280px 12px, #e3cfd9 30%, transparent),
  linear-gradient(90deg, #ddd8e6, #d7daeb 6%, #d6dbec 24%, #dad8ea 34%, #e0d5dd 40%, #e2d6d9 48%, #dddeea 50%, #e0deeb 75%, #e6e4ef); }
.sleft { display: flex; align-items: center; width: 221px; padding: 8px 0 0 18px; }
.pagesel { width: 107px; margin-left: 19px; justify-content: space-between; font-size: 13px; padding-right: 5px; }
.newpage { margin-left: 23px; color: #222; }
.newpage .ico { stroke-width: 3; }
.pagetab { width: 62px; padding: 8px 0 0 24px; color: #1878dd; font-weight: 500; border-right: 1px solid #ece4ea; }
.sright { display: flex; align-items: center; margin-left: auto; padding: 8px 18px 0 0; }
.count { width: 121px; margin-top: -6px; }
.count a { margin-left: 4px; color: #ef8a3c; }
.gem { width: 12px; height: 12px; margin-right: 17px; }
.sid { width: 89px; }
.foc { margin-left: 17px; gap: 6px; }
.play { margin: 0 17px 0 14px; }
.zoomv { width: 40px; margin-right: 9px; justify-content: space-between; }
.step { color: #333; }
.step .ico { stroke-width: 2.4; }
.full { margin: 0 12px; }
.sright input { width: 96px; height: 14px; margin: 0 3px 0 4px; appearance: none; background: linear-gradient(90deg, #333 24px, #fff 24px) center / 100% 3px no-repeat; }
.sright input::-webkit-slider-thumb { appearance: none; width: 12px; height: 12px; border: 2px solid #333; border-radius: 50%; background: #fff; }

.pointer { position: absolute; left: 130px; top: 500px; pointer-events: none; }
.arrow { fill: #e01212; filter: drop-shadow(1px 3px 2px rgba(0, 0, 0, .5)); }
.ime { position: absolute; right: 520px; bottom: 16px; display: flex; align-items: center; justify-content: center; gap: 3px; width: 61px; height: 25px; border-radius: 5px; background: #fff; box-shadow: 0 0 3px rgba(0, 0, 0, .7); color: #222; }
.ime svg { width: 12px; height: 12px; fill: none; stroke: #222; }
.mark-site { position: absolute; right: 10px; bottom: 5px; display: flex; align-items: flex-end; gap: 2px; opacity: .78; pointer-events: none; }
.mark-site > svg { width: 74px; height: 50px; margin-bottom: 3px; }
.mark-site div { display: flex; flex-direction: column; }
.mark-site b { font-size: 21px; line-height: 24px; color: #4f8fc4; font-weight: 700; text-shadow: 0 0 2px #fff; }
.mark-site span { font: 700 16px/20px "Liberation Sans", sans-serif; color: #55b36c; text-shadow: 0 0 1px #fff; }
</style>
